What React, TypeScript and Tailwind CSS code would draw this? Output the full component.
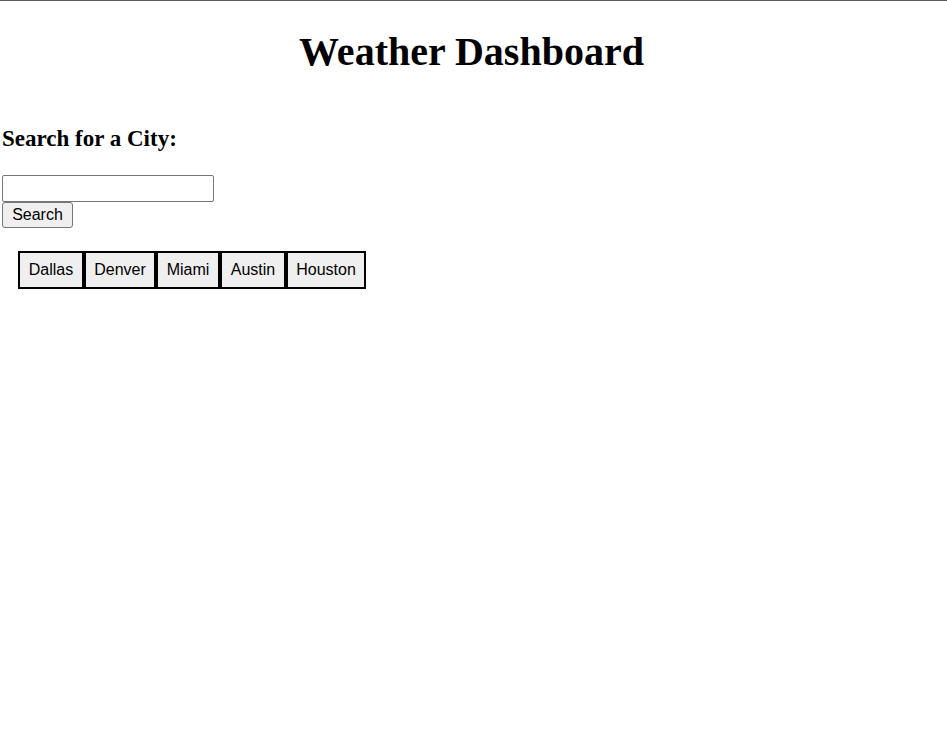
const cities: { name: string; cls: string }[] = [
  { name: "Dallas", cls: "w-[66px]" },
  { name: "Denver", cls: "w-[72px]" },
  { name: "Miami", cls: "w-[64px]" },
  { name: "Austin", cls: "w-[66px]" },
  { name: "Houston", cls: "w-[80px]" },
];

export default function App() {
  return (
    <div className="min-h-[748px] bg-white border-t border-[#595959] text-black">
      <h1 className="text-center font-bold text-[40px] leading-[46px] pt-[28px] pr-[4px] font-['Liberation_Serif',serif]">
        Weather Dashboard
      </h1>
      <div className="pl-[2px] pt-[51px]">
        <h3 className="font-bold text-[23px] leading-[26px] font-['Liberation_Serif',serif]">
          Search for a City:
        </h3>
        <div className="pt-[23px] flex flex-col items-start">
          <input
            type="text"
            className="w-[212px] h-[27px] border border-[#767676] rounded-[2px] bg-white px-[2px] text-[16px] font-['Liberation_Sans',Arial,sans-serif] outline-none"
          />
          <button className="w-[71px] h-[26px] border border-[#767676] rounded-[3px] bg-[#efefef] text-[16px] leading-[18px] font-['Liberation_Sans',Arial,sans-serif] text-black">
            Search
          </button>
        </div>
      </div>
      <div className="flex ml-[18px] mt-[23px]">
        {cities.map((c) => (
          <button
            key={c.name}
            className={
              c.cls +
              " h-[38px] border-2 border-black bg-[#efefef] text-center text-[16px] leading-[18px] font-['Liberation_Sans',Arial,sans-serif] text-black"
            }
          >
            {c.name}
          </button>
        ))}
      </div>
    </div>
  );
}
